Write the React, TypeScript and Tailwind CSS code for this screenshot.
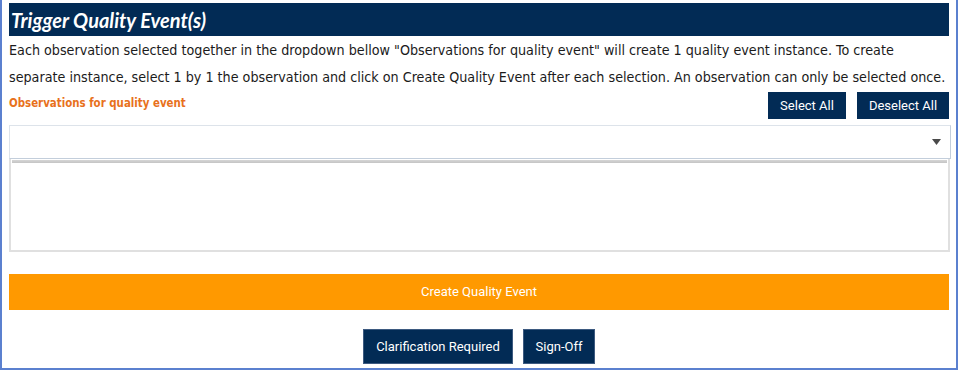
export default function App() {
  const body = { fontFamily: '"DejaVu Sans Condensed", "DejaVu Sans", sans-serif' };
  const roboto = { fontFamily: 'Roboto, "Liberation Sans", sans-serif' };

  return (
    <div className="h-[371px] w-[959px] overflow-hidden bg-white">
      <div className="flex h-[370px] w-[958px] flex-col border-2 border-t-0 border-[#5b80cf] px-[7px]">
        {/* Header */}
        <div className="mt-[3px] flex h-[33px] shrink-0 items-center bg-[#022b55] px-[2px]">
          <h1
            className="text-[20px] font-bold italic leading-none text-white"
            style={{ fontFamily: 'Lato, "Open Sans", sans-serif' }}
          >
            Trigger Quality Event(s)
          </h1>
        </div>

        {/* Intro */}
        <p className="mt-[1px] text-[14.2px] leading-[27px] text-[#1b1b1b]" style={body}>
          Each observation selected together in the dropdown bellow "Observations for quality event" will
          create 1 quality event instance. To create separate instance, select 1 by 1 the observation and
          click on Create Quality Event after each selection. An observation can only be selected once.
        </p>

        {/* Label + actions */}
        <div className="mt-[1px] flex h-[27px] shrink-0 items-start justify-between">
          <label className="pt-[3px] text-[11.4px] font-bold leading-[16px] text-[#e8711c]" style={body}>
            Observations for quality event
          </label>
          <div className="flex gap-[11px]" style={roboto}>
            <button className="h-[27px] w-[78px] bg-[#022b55] text-[13px] text-white">Select All</button>
            <button className="h-[27px] w-[92px] bg-[#022b55] text-[13px] text-white">Deselect All</button>
          </div>
        </div>

        {/* Dropdown */}
        <div className="mt-[6px] mr-[-2px] flex h-[34px] shrink-0 items-center justify-end border border-[#dde3ea] border-b-[#c3cedb] border-r-[#c3cedb] pr-[9px]">
          <svg width="9" height="6" viewBox="0 0 9 6">
            <path d="M0 0h9L4.5 6z" fill="#4a4a4a" />
          </svg>
        </div>

        {/* Selected list */}
        <div className="mr-[-1px] h-[93px] shrink-0 border-2 border-t-0 border-[#e0e0e0] px-[1px] pt-[1px]">
          <div className="h-[3px] bg-gradient-to-b from-[#d6d6d6] to-[#c4c4c4]" />
        </div>

        {/* Create */}
        <button
          className="mt-[22px] h-[36px] w-full shrink-0 bg-[#ff9900] text-[13px] text-white"
          style={roboto}
        >
          Create Quality Event
        </button>

        {/* Footer actions */}
        <div className="mt-[19px] flex shrink-0 justify-center gap-[10px]" style={roboto}>
          <button className="h-[35px] w-[150px] border border-[#3d5a80] bg-[#022b55] text-[13px] text-white">
            Clarification Required
          </button>
          <button className="h-[35px] w-[72px] border border-[#3d5a80] bg-[#022b55] text-[13px] text-white">
            Sign-Off
          </button>
        </div>
      </div>
    </div>
  );
}
